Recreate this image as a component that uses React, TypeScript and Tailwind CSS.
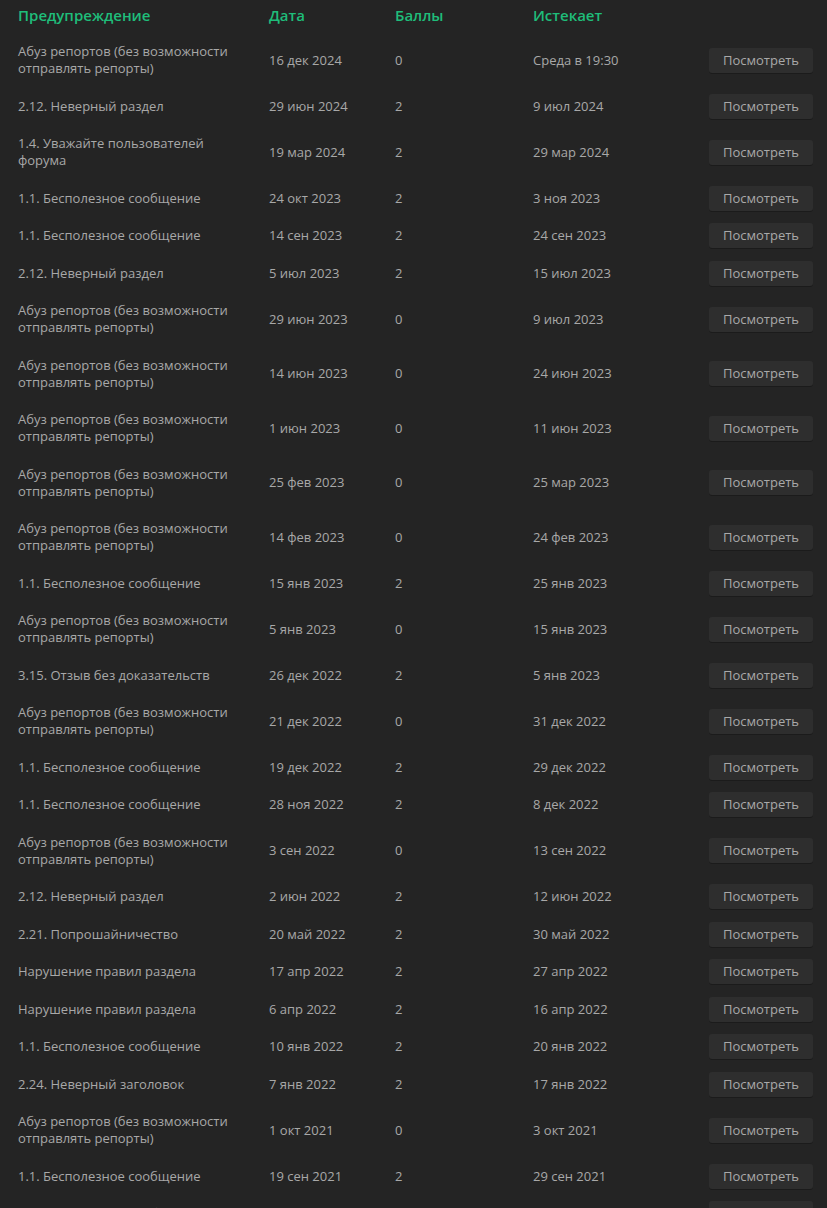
import React from "react";

// Warnings table — dark forum style
type Warning = {
  title: string;
  date: string;
  points: number;
  expires: string;
};

const ABUSE = "Абуз репортов (без возможности отправлять репорты)";
const USELESS = "1.1. Бесполезное сообщение";

const warnings: Warning[] = [
  { title: ABUSE, date: "16 дек 2024", points: 0, expires: "Среда в 19:30" },
  { title: "2.12. Неверный раздел", date: "29 июн 2024", points: 2, expires: "9 июл 2024" },
  { title: "1.4. Уважайте пользователей форума", date: "19 мар 2024", points: 2, expires: "29 мар 2024" },
  { title: USELESS, date: "24 окт 2023", points: 2, expires: "3 ноя 2023" },
  { title: USELESS, date: "14 сен 2023", points: 2, expires: "24 сен 2023" },
  { title: "2.12. Неверный раздел", date: "5 июл 2023", points: 2, expires: "15 июл 2023" },
  { title: ABUSE, date: "29 июн 2023", points: 0, expires: "9 июл 2023" },
  { title: ABUSE, date: "14 июн 2023", points: 0, expires: "24 июн 2023" },
  { title: ABUSE, date: "1 июн 2023", points: 0, expires: "11 июн 2023" },
  { title: ABUSE, date: "25 фев 2023", points: 0, expires: "25 мар 2023" },
  { title: ABUSE, date: "14 фев 2023", points: 0, expires: "24 фев 2023" },
  { title: USELESS, date: "15 янв 2023", points: 2, expires: "25 янв 2023" },
  { title: ABUSE, date: "5 янв 2023", points: 0, expires: "15 янв 2023" },
  { title: "3.15. Отзыв без доказательств", date: "26 дек 2022", points: 2, expires: "5 янв 2023" },
  { title: ABUSE, date: "21 дек 2022", points: 0, expires: "31 дек 2022" },
  { title: USELESS, date: "19 дек 2022", points: 2, expires: "29 дек 2022" },
  { title: USELESS, date: "28 ноя 2022", points: 2, expires: "8 дек 2022" },
  { title: ABUSE, date: "3 сен 2022", points: 0, expires: "13 сен 2022" },
  { title: "2.12. Неверный раздел", date: "2 июн 2022", points: 2, expires: "12 июн 2022" },
  { title: "2.21. Попрошайничество", date: "20 май 2022", points: 2, expires: "30 май 2022" },
  { title: "Нарушение правил раздела", date: "17 апр 2022", points: 2, expires: "27 апр 2022" },
  { title: "Нарушение правил раздела", date: "6 апр 2022", points: 2, expires: "16 апр 2022" },
  { title: USELESS, date: "10 янв 2022", points: 2, expires: "20 янв 2022" },
  { title: "2.24. Неверный заголовок", date: "7 янв 2022", points: 2, expires: "17 янв 2022" },
  { title: ABUSE, date: "1 окт 2021", points: 0, expires: "3 окт 2021" },
  { title: USELESS, date: "19 сен 2021", points: 2, expires: "29 сен 2021" },
  { title: USELESS, date: "8 сен 2021", points: 2, expires: "18 сен 2021" },
];

const cols = "grid grid-cols-[251px_126px_138px_176px_104px]";

function Row({ w }: { w: Warning }) {
  return (
    <div className={`${cols} items-center py-[10.25px]`}>
      <div className="pr-[22px]">{w.title}</div>
      <div>{w.date}</div>
      <div>{w.points}</div>
      <div>{w.expires}</div>
      <div>
        <button
          type="button"
          className="-my-1 h-[25px] w-[104px] rounded-[3px] bg-[#2e2e2e] text-[13px] text-[#a9a9a9] leading-[25px] shadow-[0_1px_0_rgba(0,0,0,0.25)]"
        >
          Посмотреть
        </button>
      </div>
    </div>
  );
}

export default function App() {
  return (
    <div
      className="min-h-[1208px] bg-[#242424] pl-[18px] text-[13px] leading-[17px] text-[#a8a8a8]"
      style={{ fontFamily: '"Open Sans", "Noto Sans", sans-serif' }}
    >
      {/* Header */}
      <div className={`${cols} h-[33px] pt-[4px] text-[15px] font-semibold leading-[22px] text-[#1fbd7a]`}>
        <div>Предупреждение</div>
        <div>Дата</div>
        <div>Баллы</div>
        <div>Истекает</div>
        <div />
      </div>

      {warnings.map((w, i) => (
        <Row key={i} w={w} />
      ))}
    </div>
  );
}
